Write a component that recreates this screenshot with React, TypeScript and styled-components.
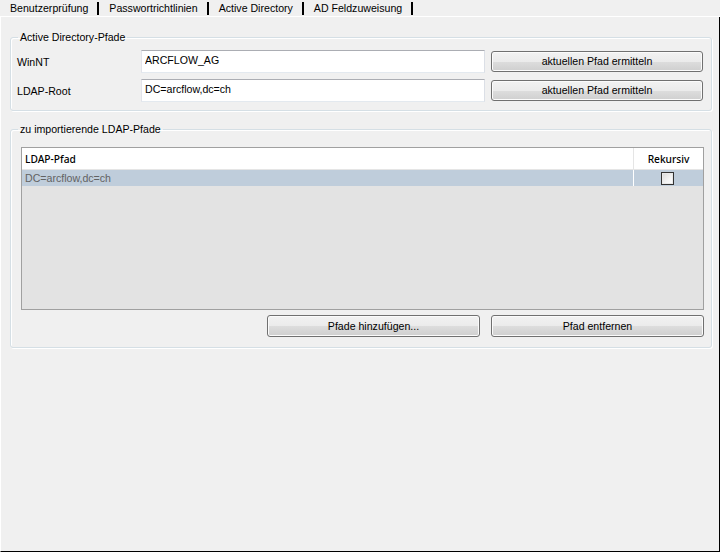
import React from "react";
import styled, { createGlobalStyle } from "styled-components";

const Global = createGlobalStyle`
  html, body { margin: 0; padding: 0; background: #f0f0f0; }
  body {
    font-family: "Liberation Sans", Arial, sans-serif;
    font-size: 10.6px;
    color: #000;
  }
  * { box-sizing: border-box; }
`;

const Window = styled.div`
  width: 720px;
  height: 552px;
  display: flex;
  flex-direction: column;
  background: #f0f0f0;
  overflow: hidden;
`;

const TabStrip = styled.div`
  flex: none;
  height: 17px;
  display: flex;
  align-items: flex-start;
  border-bottom: 1px solid #ffffff;
`;

const Tab = styled.div`
  margin-top: 2px;
  height: 13px;
  line-height: 13px;
  font-size: 10.6px;
  padding: 0 9px 0 10px;
  border-right: 2px solid #000;
  white-space: nowrap;
`;

const Panel = styled.div`
  flex: 1;
  display: flex;
  flex-direction: column;
  gap: 12px;
  padding: 14px 7px 0 9px;
  border-left: 1px solid #ffffff;
  border-right: 1px solid #000;
  border-bottom: 1px solid #000;
`;

const Group = styled.fieldset`
  margin: 0;
  padding: 0;
  min-width: 0;
  border: 1px solid #d5dfe5;
  border-radius: 3px;
  box-shadow: 1px 1px 0 #ffffff, inset 1px 1px 0 #ffffff;
`;

const Legend = styled.legend`
  margin-left: 7px;
  padding: 0 2px;
  line-height: 13px;
  height: 13px;
  white-space: nowrap;
`;

const PathGrid = styled.div`
  display: grid;
  grid-template-columns: 118px 344px 212px;
  grid-auto-rows: 23px;
  column-gap: 6px;
  row-gap: 6px;
  align-items: center;
  padding: 6px 8px 8px 6px;
`;

const Label = styled.span`
  white-space: nowrap;
`;

const Input = styled.input`
  height: 23px;
  width: 100%;
  border: 1px solid;
  border-color: #abadb3 #dbdfe6 #e3e9ef #e2e3ea;
  background: #fff;
  font: inherit;
  color: #000;
  padding: 0 3px 4px 3px;
  outline: none;
`;

const Button = styled.button<{ $h: number; $w?: number }>`
  width: ${(p) => (p.$w ? `${p.$w}px` : "100%")};
  height: ${(p) => p.$h}px;
  border: 1px solid #707070;
  border-radius: 3px;
  background: linear-gradient(#f2f2f2 0%, #ebebeb 50%, #dddddd 51%, #cfcfcf 100%);
  box-shadow: inset 0 0 0 1px #fbfbfb;
  font: inherit;
  color: #000;
  padding: 0;
  line-height: ${(p) => p.$h - 2}px;
`;

const ListBody = styled.div`
  padding: 11px 7px 10px 10px;
  display: flex;
  flex-direction: column;
  gap: 5px;
`;

const List = styled.div`
  height: 163px;
  border: 1px solid #a0a0a0;
  background: #e3e3e3;
  display: flex;
  flex-direction: column;
`;

const Row = styled.div<{ $header?: boolean }>`
  display: grid;
  grid-template-columns: 611px 1fr;
  height: ${(p) => (p.$header ? 22 : 16)}px;
  background: ${(p) => (p.$header ? "#ffffff" : "#bfcddb")};
  border-bottom: ${(p) => (p.$header ? "1px solid #e5e5e5" : "none")};
  color: ${(p) => (p.$header ? "#000" : "#626262")};
  font-family: ${(p) => (p.$header ? '"Noto Sans", "Liberation Sans", sans-serif' : "inherit")};
  font-weight: ${(p) => (p.$header ? 500 : 400)};
  font-size: ${(p) => (p.$header ? "10.2px" : "inherit")};
`;

const Cell = styled.div<{ $center?: boolean; $sep?: string }>`
  display: flex;
  align-items: center;
  justify-content: ${(p) => (p.$center ? "center" : "flex-start")};
  padding-left: ${(p) => (p.$center ? 0 : 3)}px;
  border-left: ${(p) => (p.$sep ? `1px solid ${p.$sep}` : "none")};
  white-space: nowrap;
  overflow: hidden;
`;

const Check = styled.span`
  width: 13px;
  height: 13px;
  border: 1px solid #333;
  background: linear-gradient(135deg, #d8d8d8 0%, #f4f4f4 60%, #ffffff 100%);
  box-shadow: inset 0 0 0 1px #e8e8e8;
  margin-right: 2px;
  margin-top: 1px;
`;

const ButtonRow = styled.div`
  display: flex;
  justify-content: flex-end;
  gap: 11px;
`;

export default function App() {
  return (
    <Window>
      <Global />
      <TabStrip>
        <Tab>Benutzerprüfung</Tab>
        <Tab>Passwortrichtlinien</Tab>
        <Tab>Active Directory</Tab>
        <Tab>AD Feldzuweisung</Tab>
      </TabStrip>
      <Panel>
        <Group>
          <Legend>Active Directory-Pfade</Legend>
          <PathGrid>
            <Label>WinNT</Label>
            <Input defaultValue="ARCFLOW_AG" />
            <Button $h={21}>aktuellen Pfad ermitteln</Button>
            <Label>LDAP-Root</Label>
            <Input defaultValue="DC=arcflow,dc=ch" />
            <Button $h={21}>aktuellen Pfad ermitteln</Button>
          </PathGrid>
        </Group>
        <Group>
          <Legend>zu importierende LDAP-Pfade</Legend>
          <ListBody>
            <List>
              <Row $header>
                <Cell>LDAP-Pfad</Cell>
                <Cell $center $sep="#e5e5e5">Rekursiv</Cell>
              </Row>
              <Row>
                <Cell>DC=arcflow,dc=ch</Cell>
                <Cell $center $sep="#ffffff">
                  <Check />
                </Cell>
              </Row>
            </List>
            <ButtonRow>
              <Button $h={22} $w={213}>Pfade hinzufügen...</Button>
              <Button $h={22} $w={213}>Pfad entfernen</Button>
            </ButtonRow>
          </ListBody>
        </Group>
      </Panel>
    </Window>
  );
}
